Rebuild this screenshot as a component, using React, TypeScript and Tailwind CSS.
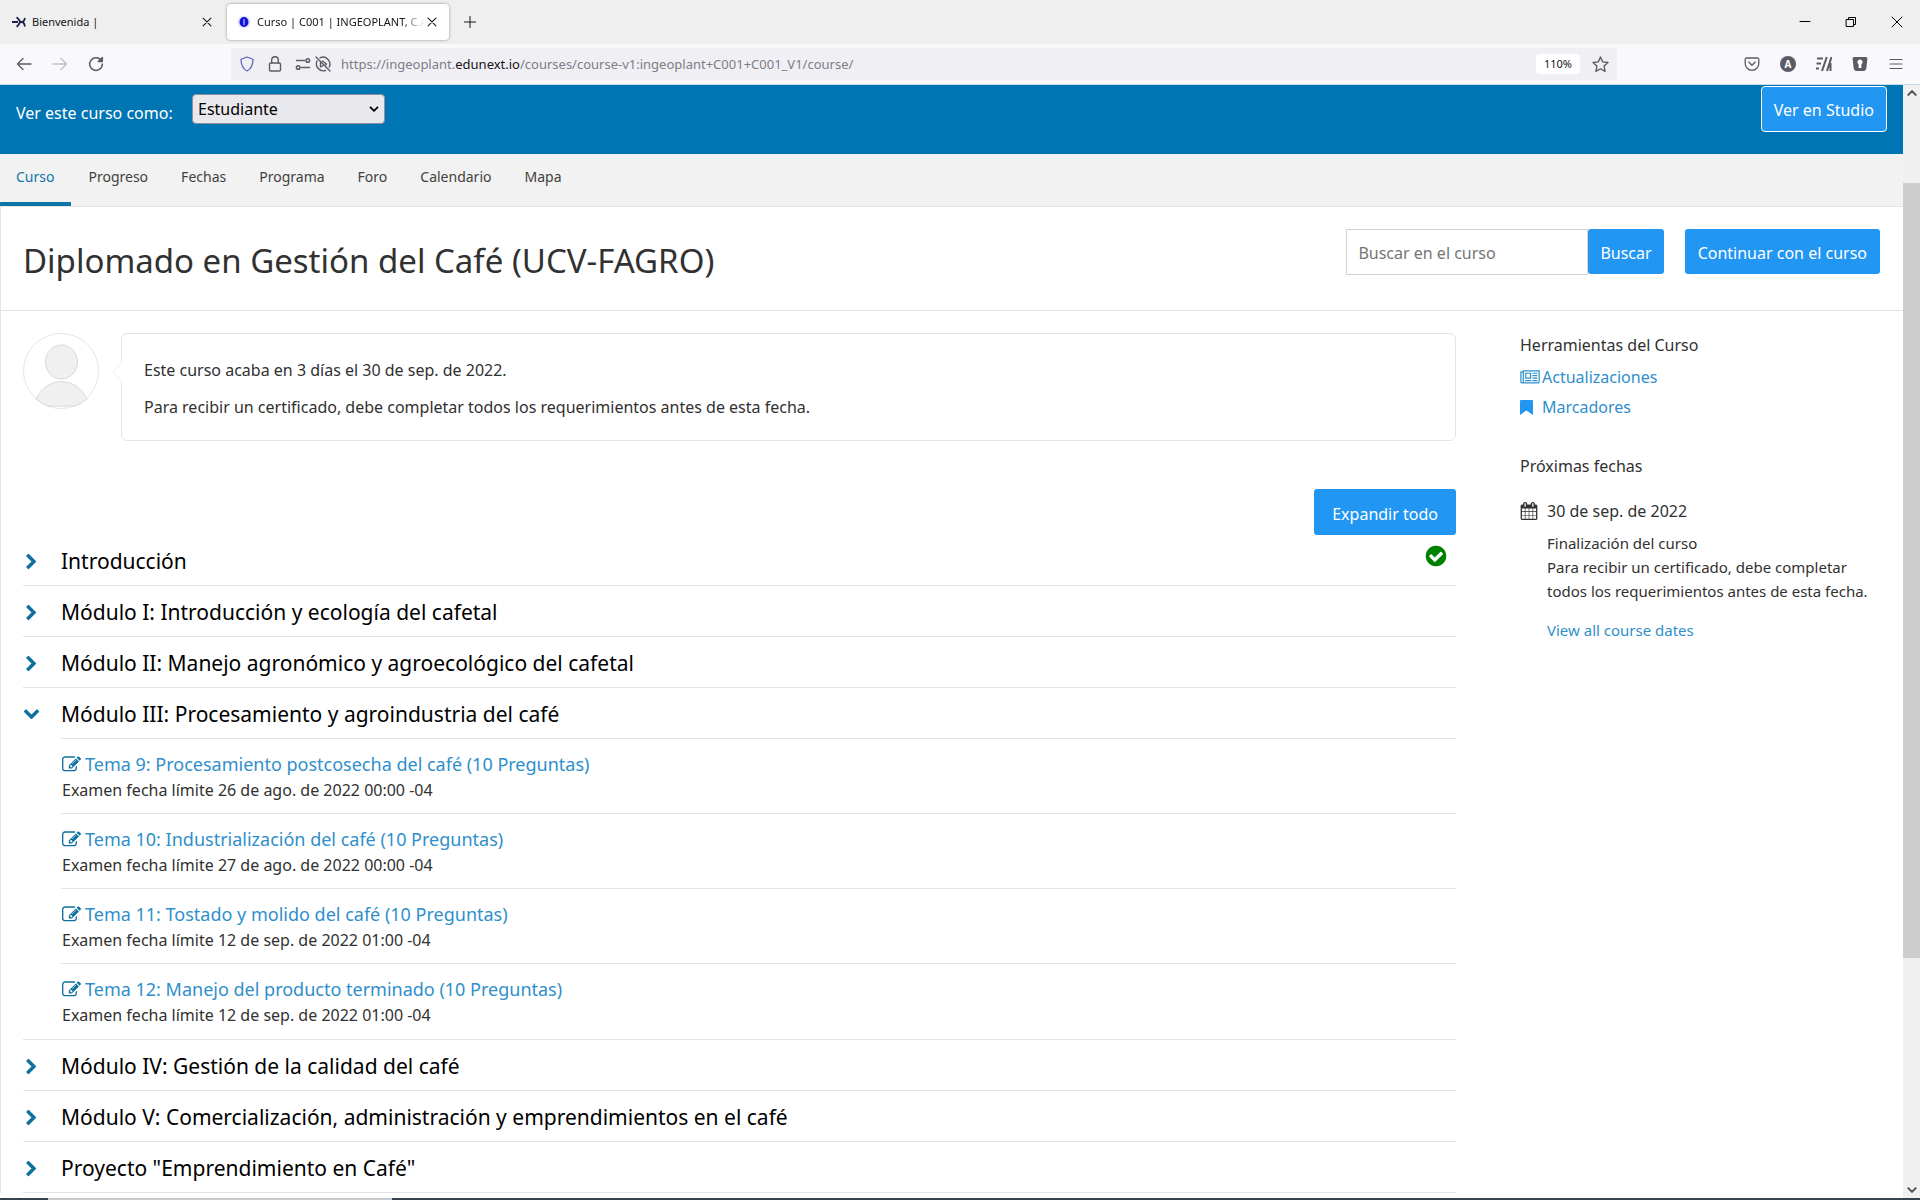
import type { ReactNode } from "react";
import { useState } from "react";

const CHEVRON =
  "M1363 941l-742 742q-19 19-45 19t-45-19l-166-166q-19-19-19-45t19-45l531-531-531-531q-19-19-19-45t19-45l166-166q19-19 45-19t45 19l742 742q19 19 19 45t-19 45z";
const PENCIL =
  "M888 1184l116-116-152-152-116 116v56h96v96h56zm440-720q-16-16-33 1l-350 350q-17 17-1 33t33-1l350-350q17-17 1-33zm80 594v190q0 119-84.5 203.5t-203.5 84.5h-832q-119 0-203.5-84.5t-84.5-203.5v-832q0-119 84.5-203.5t203.5-84.5h832q63 0 117 25 15 7 18 23 3 17-9 29l-49 49q-14 14-32 8-23-6-45-6h-832q-66 0-113 47t-47 113v832q0 66 47 113t113 47h832q66 0 113-47t47-113v-126q0-13 9-22l64-64q15-15 35-7t20 29zm-96-738l288 288-672 672h-288v-288zm444 132l-92 92-288-288 92-92q28-28 68-28t68 28l152 152q28 28 28 68t-28 68z";
const CHECK =
  "M1412 734q0-28-18-46l-91-90q-19-19-45-19t-45 19l-408 407-226-226q-19-19-45-19t-45 19l-91 90q-18 18-18 46 0 27 18 45l362 362q19 19 45 19 27 0 46-19l543-543q18-18 18-45zm252 162q0 209-103 385.5t-279.5 279.5-385.5 103-385.5-103-279.5-279.5-103-385.5 103-385.5 279.5-279.5 385.5-103 385.5 103 279.5 279.5 103 385.5z";
const CALENDAR =
  "M192 1664h288v-288h-288v288zm352 0h320v-288h-320v288zm-352-352h288v-320h-288v320zm352 0h320v-320h-320v320zm-352-384h288v-288h-288v288zm736 736h320v-288h-320v288zm-384-736h320v-288h-320v288zm768 736h288v-288h-288v288zm-384-352h320v-320h-320v320zm-352-864v-288q0-13-9.5-22.5t-22.5-9.5h-64q-13 0-22.5 9.5t-9.5 22.5v288q0 13 9.5 22.5t22.5 9.5h64q13 0 22.5-9.5t9.5-22.5zm736 864h288v-320h-288v320zm-384-384h320v-288h-320v288zm384 0h288v-288h-288v288zm32-480v-288q0-13-9.5-22.5t-22.5-9.5h-64q-13 0-22.5 9.5t-9.5 22.5v288q0 13 9.5 22.5t22.5 9.5h64q13 0 22.5-9.5t9.5-22.5zm384-64v1280q0 52-38 90t-90 38h-1408q-52 0-90-38t-38-90v-1280q0-52 38-90t90-38h128v-96q0-66 47-113t113-47h64q66 0 113 47t47 113v96h384v-96q0-66 47-113t113-47h64q66 0 113 47t47 113v96h128q52 0 90 38t38 90z";
const NEWS =
  "M1024 512h-384v384h384v-384zm128 640v128h-640v-128h640zm0-768v640h-640v-640h640zm640 768v128h-512v-128h512zm0-256v128h-512v-128h512zm0-256v128h-512v-128h512zm0-256v128h-512v-128h512zm-1536 960v-960h-128v960q0 26 19 45t45 19 45-19 19-45zm1664 0v-1088h-1536v1088q0 33-11 64h1483q26 0 45-19t19-45zm128-1216v1216q0 80-56 136t-136 56h-1664q-80 0-136-56t-56-136v-1088h256v-128h1792z";

const NAV = ["Curso", "Progreso", "Fechas", "Programa", "Foro", "Calendario", "Mapa"];

type Exam = { title: string; due: string };
type Module = { title: string; done?: boolean; exams?: Exam[] };

const MODULES: Module[] = [
  { title: "Introducción", done: true },
  { title: "Módulo I: Introducción y ecología del cafetal" },
  { title: "Módulo II: Manejo agronómico y agroecológico del cafetal" },
  {
    title: "Módulo III: Procesamiento y agroindustria del café",
    exams: [
      { title: "Tema 9: Procesamiento postcosecha del café (10 Preguntas)", due: "26 de ago. de 2022 00:00 -04" },
      { title: "Tema 10: Industrialización del café (10 Preguntas)", due: "27 de ago. de 2022 00:00 -04" },
      { title: "Tema 11: Tostado y molido del café (10 Preguntas)", due: "12 de sep. de 2022 01:00 -04" },
      { title: "Tema 12: Manejo del producto terminado (10 Preguntas)", due: "12 de sep. de 2022 01:00 -04" },
    ],
  },
  { title: "Módulo IV: Gestión de la calidad del café" },
  { title: "Módulo V: Comercialización, administración y emprendimientos en el café" },
  { title: 'Proyecto "Emprendimiento en Café"' },
];

function Glyph({ d, box = "0 0 1792 1792", className }: { d: string; box?: string; className: string }) {
  return (
    <svg viewBox={box} className={className} fill="currentColor" aria-hidden="true">
      <path d={d} />
    </svg>
  );
}

function Line({ children, className = "size-4", width = 1.3 }: { children: ReactNode; className?: string; width?: number }) {
  return (
    <svg
      viewBox="0 0 16 16"
      className={className}
      fill="none"
      stroke="currentColor"
      strokeWidth={width}
      strokeLinecap="round"
      strokeLinejoin="round"
      aria-hidden="true"
    >
      {children}
    </svg>
  );
}

function IconButton({ label, children, className = "" }: { label: string; children: ReactNode; className?: string }) {
  return (
    <button type="button" aria-label={label} className={`flex shrink-0 items-center justify-center ${className}`}>
      {children}
    </button>
  );
}

const cross = <path d="M3.5 3.5l9 9M12.5 3.5l-9 9" />;

function TabStrip() {
  return (
    <div className="flex h-11 items-center bg-[#efeff0] text-[11px] text-[#15141a]">
      <div className="flex w-[227px] items-center pr-[13px] pl-3">
        <svg viewBox="0 0 14 12" className="h-3 w-3.5" fill="none" stroke="#20204f" strokeWidth="1.8" aria-hidden="true">
          <path d="M0 6h6M4.5 1.5C7 2 7 6 9 6s3-.2 4-4M4.5 10.5C7 10 7 6 9 6s3 .2 4 4.5" />
        </svg>
        <span className="ml-1.5 flex-1">Bienvenida |</span>
        <IconButton label="Cerrar pestaña">
          <Line className="size-3.5" width={1.2}>{cross}</Line>
        </IconButton>
      </div>
      <div className="flex h-9 w-[222px] items-center rounded bg-white pr-2.5 pl-2.5 shadow-[0_0_3px_rgba(0,0,0,0.4)]">
        <svg viewBox="0 0 14 14" className="size-3.5 shrink-0" aria-hidden="true">
          <circle cx="7" cy="7" r="6.5" fill="#dfe3ff" />
          <ellipse cx="7" cy="7" rx="4.5" ry="5" fill="#1414d8" />
          <path d="M7 4v6" stroke="#8fa0ff" strokeWidth="1.5" />
        </svg>
        <span className="ml-1.5 flex-1 overflow-hidden whitespace-nowrap [mask-image:linear-gradient(to_right,black_86%,transparent)]">
          Curso | C001 | INGEOPLANT, C.A.
        </span>
        <IconButton label="Cerrar pestaña">
          <Line className="size-3.5" width={1.2}>{cross}</Line>
        </IconButton>
      </div>
      <IconButton label="Nueva pestaña" className="ml-[13px]">
        <Line width={1}>
          <path d="M8 2.5v11M2.5 8h11" />
        </Line>
      </IconButton>
      <div className="ml-auto flex items-center gap-[30px] pr-[15px] text-black">
        <IconButton label="Minimizar">
          <Line width={1}><path d="M3 7.5h10" /></Line>
        </IconButton>
        <IconButton label="Restaurar">
          <Line width={1}>
            <path d="M3.5 5.500h7v7h-7zM5.500 5.500v-2h7v7h-2" />
          </Line>
        </IconButton>
        <IconButton label="Cerrar">
          <Line width={1}><path d="M3 3l10 10M13 3L3 13" /></Line>
        </IconButton>
      </div>
    </div>
  );
}

function Toolbar() {
  return (
    <div className="flex h-[41px] items-center border-b border-[#c9dbe4] bg-[#f9f9fb] pr-4 pl-4 text-[#5b5b66]">
      <div className="flex w-[215px] shrink-0 items-center gap-5">
        <IconButton label="Atrás">
          <Line><path d="M15 8H1.5M7 2.5L1.5 8 7 13.5" /></Line>
        </IconButton>
        <IconButton label="Adelante" className="text-[#bdbdc4]">
          <Line><path d="M1 8h13.5M9 2.5L14.5 8 9 13.5" /></Line>
        </IconButton>
        <IconButton label="Recargar">
          <Line width={1.5}>
            <path d="M13.5 5A6.300 6.300 0 1 0 14.300 8" />
            <path d="M14.300 1.500v4h-4z" fill="currentColor" />
          </Line>
        </IconButton>
      </div>
      <div className="flex h-8 flex-1 items-center bg-[#f0f0f4] px-2">
        <Line className="size-4 text-[#5a5fc0]" width={1.2}>
          <path d="M8 1l6 2.200c0 5.300-1.500 9.300-6 11.800C3.500 12.500 2 8.500 2 3.200z" />
        </Line>
        <Line className="ml-3 size-4" width={1.4}>
          <rect x="2.500" y="7" width="11" height="8" rx="1.200" />
          <path d="M4.700 7V4a3.300 3.300 0 0 1 6.600 0v3" />
        </Line>
        <Line className="ml-3 size-4" width={1.5}>
          <path d="M1.500 4.500h8M14.500 11.500h-8" />
          <circle cx="12.800" cy="4.500" r="1.800" />
          <circle cx="3.200" cy="11.500" r="1.800" />
        </Line>
        <Line className="ml-1 size-4" width={1.4}>
          <path d="M1 1l14 14M5 1.800a7 7 0 0 1 9.300 9.200M2 5a7 7 0 0 0 8.500 9.500M5.500 6v5l2.500-1.500M7.500 5l4 3-.8.8" />
        </Line>
        <div className="relative ml-2.5 flex-1 text-[13px] leading-8">
          <input
            aria-label="Dirección"
            defaultValue="https://ingeoplant.edunext.io/courses/course-v1:ingeoplant+C001+C001_V1/course/"
            className="w-full bg-transparent text-transparent caret-black outline-none"
          />
          <div aria-hidden="true" className="pointer-events-none absolute inset-0 whitespace-nowrap text-[#7d7d87]">
            https://ingeoplant.<span className="text-[#15141a]">edunext.io</span>
            /courses/course-v1:ingeoplant+C001+C001_V1/course/
          </div>
        </div>
        <button type="button" className="h-5 rounded bg-white px-2 text-[11px] text-[#15141a]">110%</button>
        <IconButton label="Añadir a marcadores" className="ml-3">
          <Line className="size-[17px]" width={1.3}>
            <path d="M8 1l2.100 4.500 4.900.6-3.600 3.400.9 4.900L8 12l-4.300 2.400.9-4.900L1 6.100l4.900-.6z" />
          </Line>
        </IconButton>
      </div>
      <div className="flex items-center gap-5 pl-[127px]">
        <IconButton label="Guardar en Pocket">
          <Line width={1.3}>
            <path d="M2.500 2h11a1.300 1.300 0 0 1 1.300 1.300V7.500a6.800 6.800 0 0 1-13.600 0V3.300A1.300 1.300 0 0 1 2.500 2zM4.800 6L8 9.200 11.200 6" />
          </Line>
        </IconButton>
        <IconButton label="Cuenta">
          <span className="flex size-4 items-center justify-center rounded-full bg-[#5b5b66] text-[10px] leading-4 font-bold text-white">A</span>
        </IconButton>
        <IconButton label="Extensión">
          <svg viewBox="0 0 16 16" className="size-4" fill="none" stroke="#5b5b66" strokeWidth="2" aria-hidden="true">
            <path d="M1 2.500h6M.5 7.500h4.500M0 12.500h3M10.800 1L6 15M15.500 1L11 15M14.500 7v8" />
          </svg>
        </IconButton>
        <IconButton label="Contraseñas">
          <svg viewBox="0 0 16 16" className="size-4" aria-hidden="true">
            <path d="M2 1h12q1.500 0 1.400 1.500L14.500 11q-.3 4-3 4h-7q-2.700 0-3-4L.6 2.500Q.5 1 2 1z" fill="#5b5b66" />
            <path d="M8 3.500a2.600 2.600 0 0 1 1.400 4.800V12H6.600V8.300A2.600 2.600 0 0 1 8 3.500z" fill="#fff" />
          </svg>
        </IconButton>
        <IconButton label="Menú">
          <Line width={1.2}><path d="M2 3.500h12M2 8h12M2 12.500h12" /></Line>
        </IconButton>
      </div>
    </div>
  );
}

function ModuleRow({ module }: { module: Module }) {
  const [open, setOpen] = useState(Boolean(module.exams));
  return (
    <li className="border-b border-[#e4e4e4]">
      <button type="button" aria-expanded={open} onClick={() => setOpen(!open)} className="flex w-full text-left">
        <span className="flex h-[50px] w-[38px] items-center pt-0.5 text-[#0f70a0]">
          <Glyph d={CHEVRON} className={open ? "size-[17px] rotate-90" : "size-[17px]"} />
        </span>
        <span
          className={
            open && module.exams
              ? "flex h-[51px] flex-1 items-center border-b border-[#e4e4e4] pt-[3px] text-[21px] text-black"
              : "flex h-[50px] flex-1 items-center pt-[3px] text-[21px] text-black"
          }
        >
          {module.title}
          {module.done && <Glyph d={CHECK} className="mr-2 mb-3 ml-auto size-6 text-[#008100]" />}
        </span>
      </button>
      {open && module.exams && (
        <ol className="ml-[38px] divide-y divide-[#e4e4e4]">
          {module.exams.map((e) => (
            <li key={e.title} className="pt-3 pb-[9px] pl-px last:pb-2.5">
              <a href="#tema" className="flex items-center text-lg leading-[26px] text-[#2f8fcb]">
                <Glyph d={PENCIL} className="mr-1 size-[19px] text-[#0f70a0]" />
                {e.title}
              </a>
              <p className="leading-[27px] text-[#313131]">Examen fecha límite {e.due}</p>
            </li>
          ))}
        </ol>
      )}
    </li>
  );
}

function Sidebar() {
  return (
    <aside className="w-[360px] shrink-0 text-[#313131]">
      <h2 className="leading-6">Herramientas del Curso</h2>
      <ul className="mt-[5px] leading-[30px] text-[#2f8fcb]">
        <li>
          <a href="#actualizaciones" className="flex items-center">
            <span className="w-[22px]">
              <Glyph d={NEWS} box="0 0 2048 1792" className="h-[17px] w-5" />
            </span>
            Actualizaciones
          </a>
        </li>
        <li>
          <a href="#marcadores" className="flex items-center">
            <span className="w-[22px]">
              <svg viewBox="0 0 13 15" className="h-[15px] w-[13px]" fill="#2196f3" aria-hidden="true">
                <path d="M1 0h11q1 0 1 1v14L6.500 10.500 0 15V1q0-1 1-1z" />
              </svg>
            </span>
            Marcadores
          </a>
        </li>
      </ul>
      <h2 className="mt-8 leading-6">Próximas fechas</h2>
      <div className="mt-[21px] flex items-center leading-6">
        <span className="w-[27px]">
          <Glyph d={CALENDAR} className="size-[18px]" />
        </span>
        30 de sep. de 2022
      </div>
      <div className="mt-2 pl-[27px] text-[15px] leading-6">
        <p>Finalización del curso</p>
        <p>Para recibir un certificado, debe completar todos los requerimientos antes de esta fecha.</p>
        <a href="#fechas" className="mt-[15px] block text-[#2f8fcb]">View all course dates</a>
      </div>
    </aside>
  );
}

function CoursePage() {
  return (
    <div className="min-w-0 flex-1 overflow-hidden bg-white">
      <div className="flex h-[69px] items-start bg-[#0075b4] pt-px pr-4 pl-4 text-white">
        <label htmlFor="view-as" className="mt-[15px] w-[176px] leading-6">Ver este curso como:</label>
        <div className="relative mt-2">
          <select
            id="view-as"
            className="h-[30px] w-[193px] appearance-none rounded border border-[#8f8f9d] bg-[#e9e9ed] pr-6 pl-[5px] text-base leading-7 text-black"
          >
            <option>Estudiante</option>
            <option>Personal</option>
          </select>
          <svg viewBox="0 0 10 6" className="pointer-events-none absolute top-3 right-1.5 h-1.5 w-2.5" fill="none" stroke="#000" strokeWidth="1.8" aria-hidden="true">
            <path d="M1 .8l4 4 4-4" />
          </svg>
        </div>
        <a href="#studio" className="ml-auto rounded border border-white bg-[#2196f3] px-3 pt-[11px] pb-[9px] leading-6">
          Ver en Studio
        </a>
      </div>
      <nav className="flex h-[53px] gap-px border-b border-[#e4e4e4] bg-[#f2f2f2] text-sm">
        {NAV.map((n, i) => (
          <a
            key={n}
            href={`#${n}`}
            aria-current={i === 0 ? "page" : undefined}
            className={
              i === 0
                ? "border-b-4 border-[#0f75a8] pt-3 pr-[17px] pl-4 leading-[22px] text-[#0f75a8]"
                : "px-4 pt-3 leading-[22px] text-[#414141]"
            }
          >
            {n}
          </a>
        ))}
      </nav>
      <div className="border-l border-[#e4e4e4]">
        <div className="flex h-[104px] items-start border-b border-[#e4e4e4] pt-[22px] pr-[23px] pl-[22px]">
          <h1 className="flex-1 pt-2.5 text-[33px] leading-[44px] text-[#313131]">
            Diplomado en Gestión del Café (UCV-FAGRO)
          </h1>
          <form className="flex" onSubmit={(e) => e.preventDefault()}>
            <input
              aria-label="Buscar en el curso"
              placeholder="Buscar en el curso"
              className="h-[46px] w-[242px] border border-[#d2d2d2] bg-white px-[11px] pt-0.5 text-[#313131] outline-none placeholder:text-[#757575]"
            />
            <button type="submit" className="h-[45px] rounded-[3px] bg-[#2196f3] px-3 pt-0.5 text-white">Buscar</button>
          </form>
          <a href="#continuar" className="ml-[21px] rounded-[3px] bg-[#2196f3] px-[13px] pt-3 pb-[9px] leading-6 text-white">
            Continuar con el curso
          </a>
        </div>
        <div className="flex gap-16 pt-[22px] pr-[23px] pl-[22px]">
          <main className="min-w-0 flex-1">
            <div className="flex items-start">
              <svg viewBox="0 0 76 76" className="size-[76px]" aria-hidden="true">
                <circle cx="38" cy="38" r="37.500" fill="#fff" stroke="#e4e4e4" />
                <ellipse cx="38.500" cy="29" rx="16" ry="17" fill="#f0f0f0" stroke="#d8d8d8" />
                <path d="M13 66q9-17.500 25.500-17.500T64 66q-10 7-12 7H25q-5-1-12-7z" fill="#f0f0f0" stroke="#d8d8d8" />
              </svg>
              <div className="relative ml-[22px] flex-1 rounded-md border border-[#e4e4e4] px-[22px] pt-6 pb-[21px] leading-6 text-[#313131]">
                <svg viewBox="0 0 10 20" className="absolute top-7 -left-2.5 h-5 w-2.5" fill="#fff" stroke="#f0f0f0" aria-hidden="true">
                  <path d="M10 0L1 10l9 10" />
                </svg>
                <p>Este curso acaba en 3 días el 30 de sep. de 2022.</p>
                <p className="mt-[13px]">
                  Para recibir un certificado, debe completar todos los requerimientos antes de esta fecha.
                </p>
              </div>
            </div>
            <div className="mt-12 flex justify-end">
              <button type="button" className="h-[46px] rounded-[3px] bg-[#2196f3] px-[18px] pt-[3px] text-white">Expandir todo</button>
            </div>
            <ol>
              {MODULES.map((m) => (
                <ModuleRow key={m.title} module={m} />
              ))}
            </ol>
          </main>
          <Sidebar />
        </div>
      </div>
    </div>
  );
}

function ScrollBar() {
  return (
    <div className="flex w-[17px] shrink-0 flex-col items-center bg-[#f0f0f0] text-[#505050]">
      <Line className="h-4 w-3" width={2.6}><path d="M3 10.500l5-5 5 5" /></Line>
      <div className="h-[7.4%] w-full" />
      <div className="h-[69.6%] w-full bg-[#cdcdcd]" />
      <Line className="mt-auto h-4 w-3" width={2.6}><path d="M3 5.500l5 5 5-5" /></Line>
    </div>
  );
}

export default function App() {
  return (
    <div className="flex h-screen flex-col overflow-hidden bg-white font-['Noto_Sans',sans-serif] text-base">
      <TabStrip />
      <Toolbar />
      <div className="flex min-h-0 flex-1">
        <CoursePage />
        <ScrollBar />
      </div>
      <div className="flex h-0.5 bg-[#36424f]">
        <div className="ml-12 w-[344px] bg-[#c8ccd0]" />
      </div>
    </div>
  );
}
